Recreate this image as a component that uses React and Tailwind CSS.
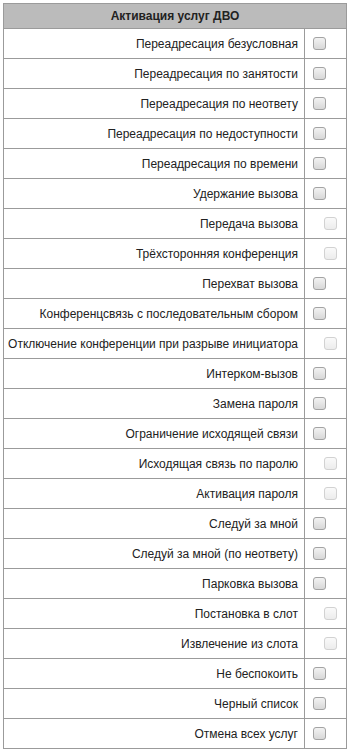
import React from 'react';

const services = [
  ['Переадресация безусловная', true],
  ['Переадресация по занятости', true],
  ['Переадресация по неответу', true],
  ['Переадресация по недоступности', true],
  ['Переадресация по времени', true],
  ['Удержание вызова', true],
  ['Передача вызова', false],
  ['Трёхсторонняя конференция', false],
  ['Перехват вызова', true],
  ['Конференцсвязь с последовательным сбором', true],
  ['Отключение конференции при разрыве инициатора', false],
  ['Интерком-вызов', true],
  ['Замена пароля', true],
  ['Ограничение исходящей связи', true],
  ['Исходящая связь по паролю', false],
  ['Активация пароля', false],
  ['Следуй за мной', true],
  ['Следуй за мной (по неответу)', true],
  ['Парковка вызова', true],
  ['Постановка в слот', false],
  ['Извлечение из слота', false],
  ['Не беспокоить', true],
  ['Черный список', true],
  ['Отмена всех услуг', true]
];

function Box({ enabled }) {
  return enabled ? (
    <span className="block w-[13px] h-[13px] rounded-[3px] border border-[#a3a3a3] bg-gradient-to-b from-[#f2f2f2] to-[#d8d8d8]" />
  ) : (
    <span className="block w-[13px] h-[13px] rounded-[3px] border border-[#d2d2d2] bg-gradient-to-b from-[#fafafa] to-[#ececec]" />
  );
}

export default function App() {
  return (
    <div className="p-[3px] bg-white" style={{ fontFamily: '"Liberation Sans", Arial, sans-serif' }}>
      <table className="w-[344px] border-collapse border border-[#9b9b9b] text-[12px] text-[#222]">
        <thead>
          <tr className="h-[25px] bg-[#bbbbbb]">
            <th colSpan={2} className="border border-[#9b9b9b] font-bold text-center text-[#222]">
              Активация услуг ДВО
            </th>
          </tr>
        </thead>
        <tbody>
          {services.map(([name, enabled]) => (
            <tr key={name} className="h-[30px]">
              <td className="w-[301px] border border-[#9b9b9b] text-right pr-[6px] whitespace-nowrap">{name}</td>
              <td className={`border border-[#9b9b9b] ${enabled ? 'pl-[8px]' : 'pl-[19px]'}`}>
                <Box enabled={enabled} />
              </td>
            </tr>
          ))}
        </tbody>
      </table>
    </div>
  );
}
